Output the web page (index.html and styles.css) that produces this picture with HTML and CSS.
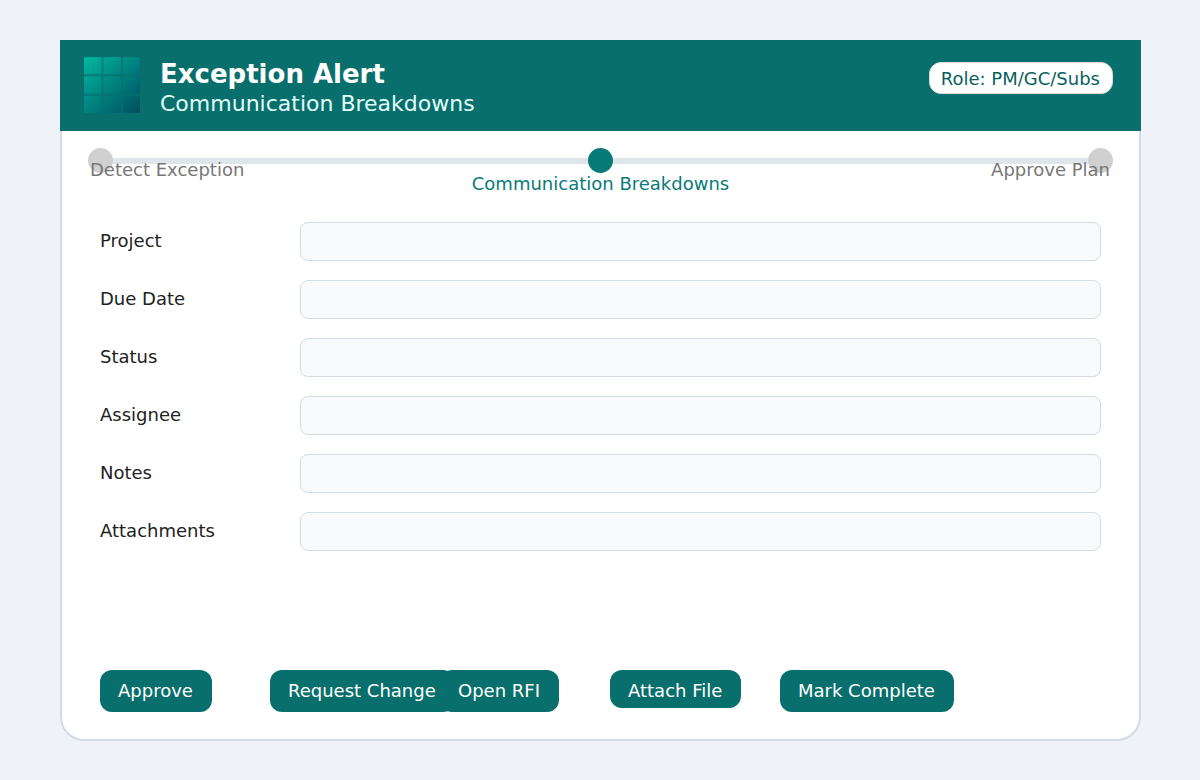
FILE: index.html
```
<!DOCTYPE html>
<html lang="en">
<head>
  <meta charset="UTF-8">
  <meta name="viewport" content="width=device-width, initial-scale=1">
  <title>Exception Alert - Communication Breakdowns</title>
  <link rel="stylesheet" href="styles.css">
</head>
<body>
  <main class="card">
    <header class="card-header">
      <svg class="logo" viewBox="0 0 56 56" aria-hidden="true">
        <defs>
          <linearGradient id="logoFill" gradientUnits="userSpaceOnUse" x1="0" y1="0" x2="56" y2="56">
            <stop offset="0" stop-color="#00b8a0"/>
            <stop offset="1" stop-color="#004d5f"/>
          </linearGradient>
        </defs>
        <rect width="56" height="56" rx="2" fill="url(#logoFill)" opacity="0.35"/>
        <g fill="url(#logoFill)">
          <rect x="0" y="0" width="17.5" height="17" rx="1.5"/>
          <rect x="19.5" y="0" width="17.5" height="17" rx="1.5"/>
          <rect x="39" y="0" width="17" height="17" rx="1.5"/>
          <rect x="0" y="19.5" width="17.5" height="17" rx="1.5"/>
          <rect x="19.5" y="19.5" width="17.5" height="17" rx="1.5"/>
          <rect x="39" y="19.5" width="17" height="17" rx="1.5"/>
          <rect x="0" y="39" width="17.5" height="17" rx="1.5"/>
          <rect x="19.5" y="39" width="17.5" height="17" rx="1.5"/>
          <rect x="39" y="39" width="17" height="17" rx="1.5"/>
        </g>
      </svg>
      <div class="titles">
        <h1>Exception Alert</h1>
        <p>Communication Breakdowns</p>
      </div>
      <span class="role">Role: PM/GC/Subs</span>
    </header>

    <div class="card-body">
      <ol class="stepper">
        <li class="step"><span class="step-label">Detect Exception</span></li>
        <li class="step current" aria-current="step"><span class="step-label">Communication Breakdowns</span></li>
        <li class="step"><span class="step-label">Approve Plan</span></li>
      </ol>

      <form class="alert-form">
        <div class="field">
          <label for="project">Project</label>
          <input type="text" id="project">
        </div>
        <div class="field">
          <label for="dueDate">Due Date</label>
          <input type="text" id="dueDate">
        </div>
        <div class="field">
          <label for="status">Status</label>
          <input type="text" id="status">
        </div>
        <div class="field">
          <label for="assignee">Assignee</label>
          <input type="text" id="assignee">
        </div>
        <div class="field">
          <label for="notes">Notes</label>
          <input type="text" id="notes">
        </div>
        <div class="field">
          <label for="attachments">Attachments</label>
          <input type="text" id="attachments">
        </div>

        <div class="actions">
          <button type="button">Approve</button>
          <button type="button">Request Change</button>
          <button type="button">Open RFI</button>
          <button type="button" class="short">Attach File</button>
          <button type="button">Mark Complete</button>
        </div>
      </form>
    </div>
  </main>
</body>
</html>
```
FILE: styles.css
```
* {
  box-sizing: border-box;
}
body {
  margin: 0;
  padding: 40px 59px 39px 60px;
  background: #eff3f7;
  color: #222;
  font-family: "DejaVu Sans", Verdana, sans-serif;
  font-size: 18px;
  line-height: 22px;
}

/* Header */
.card-header {
  display: flex;
  align-items: flex-start;
  padding: 17px 28px 14px 24px;
  background: #086f6d;
}
.logo {
  width: 56px;
  height: 56px;
  margin-right: 20px;
}
.titles h1 {
  margin: 0;
  font-size: 26px;
  line-height: 34px;
  color: #fff;
}
.titles p {
  margin: 0;
  font-size: 22px;
  line-height: 26px;
  color: #e0fffa;
}
.role {
  margin: 5px 0 0 auto;
  padding: 5px 12px 3px 11px;
  border: 1px solid #ddd;
  border-radius: 12px;
  background: #fff;
  color: #0a5f5e;
}

.card-body {
  padding: 17px 38px 27px;
  border: 2px solid #d0dbe6;
  border-top: 0;
  border-radius: 0 0 24px 24px;
  background: #fff;
}

/* Stepper */
.stepper {
  position: relative;
  display: flex;
  justify-content: space-between;
  margin: 0 -12px 49px;
  padding: 0;
  list-style: none;
}
.stepper::before {
  content: '';
  position: absolute;
  top: 10px;
  left: 12px;
  right: 12px;
  height: 6px;
  background: #dde6eb;
}
.step {
  position: relative;
  width: 25px;
  height: 25px;
  border-radius: 50%;
  background: #d0d0d0;
  color: #777;
}
.step-label {
  position: absolute;
  top: 11px;
  white-space: nowrap;
}
.step:first-child .step-label {
  left: 2px;
}
.step:last-child .step-label {
  right: 3px;
}
.step.current {
  background: #087a78;
  color: #087a78;
}
.step.current .step-label {
  top: 25px;
  left: 50%;
  transform: translateX(-50%);
}

/* Form */
.field {
  display: grid;
  grid-template-columns: 200px 1fr;
  align-items: center;
  margin-bottom: 19px;
}
.field label {
  padding-bottom: 2px;
}
.field input {
  width: 100%;
  height: 39px;
  padding: 0 12px;
  border: 1px solid #d0dce8;
  border-radius: 8px;
  background: #f8fafc;
  color: inherit;
  font: inherit;
}
.field input:focus {
  outline: none;
  border-color: #087a78;
}
.actions {
  display: grid;
  grid-template-columns: repeat(5, 170px);
  align-items: start;
  justify-items: start;
  margin-top: 119px;
}
.actions button {
  padding: 10px 19px 10px 18px;
  border: 0;
  border-radius: 12px;
  background: #086f6d;
  color: #fff;
  font: inherit;
  white-space: nowrap;
  cursor: pointer;
}
.actions button:hover {
  background: #087a78;
}
.actions .short {
  padding-bottom: 6px;
}
```
